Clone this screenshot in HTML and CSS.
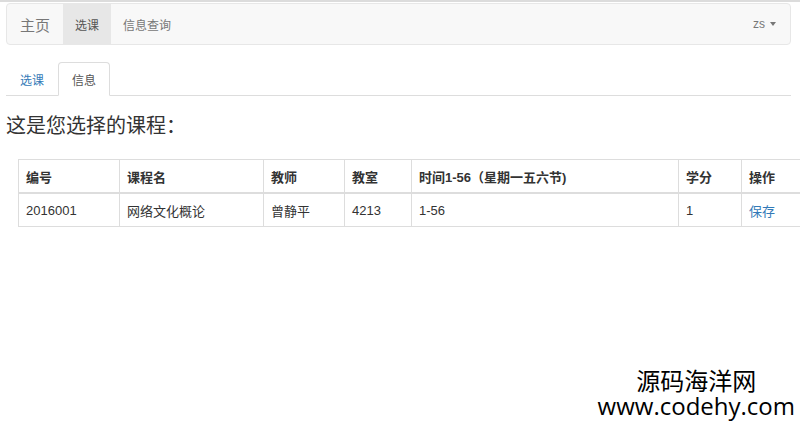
FILE: index.html
```html
<!DOCTYPE html>
<html lang="zh-CN">
<head>
<meta charset="utf-8">
<title>选课</title>
<link rel="stylesheet" href="styles.css">
</head>
<body>
<div class="page">
  <nav class="navbar">
    <a class="brand">主页</a>
    <ul class="nav">
      <li class="nav-item active">选课</li>
      <li class="nav-item">信息查询</li>
    </ul>
    <div class="user">zs <span class="caret"></span></div>
  </nav>

  <ul class="tabs">
    <li class="tab">选课</li>
    <li class="tab tab-active">信息</li>
  </ul>

  <h3 class="title">这是您选择的课程：</h3>

  <div class="table-wrap">
    <table class="courses">
      <colgroup>
        <col class="c1"><col class="c2"><col class="c3"><col class="c4"><col class="c5"><col class="c6"><col class="c7">
      </colgroup>
      <thead>
        <tr><th>编号</th><th>课程名</th><th>教师</th><th>教室</th><th>时间1-56（星期一五六节)</th><th>学分</th><th>操作</th></tr>
      </thead>
      <tbody>
        <tr><td>2016001</td><td>网络文化概论</td><td>曾静平</td><td>4213</td><td>1-56</td><td>1</td><td><a class="link">保存</a></td></tr>
      </tbody>
    </table>
  </div>
</div>
<div class="watermark">源码海洋网
www.codehy.com</div>
</body>
</html>
```

FILE: styles.css
```css
html, body {
  margin: 0;
  padding: 0;
  background: #fff;
}
body {
  width: 800px;
  height: 422px;
  overflow: hidden;
  border-top: 2px solid #dcdcdc;
  box-sizing: border-box;
  font-family: "Liberation Sans", "Noto Sans CJK SC", Arial, sans-serif;
  color: #333;
  position: relative;
}
.page {
  padding: 1px 9px 0 6px;
}
.navbar {
  display: flex;
  align-items: stretch;
  height: 42px;
  box-sizing: border-box;
  background: #f8f8f8;
  border: 1px solid #e7e7e7;
  border-radius: 4px;
}
.brand {
  display: flex;
  align-items: center;
  padding: 0 13px;
  font-size: 15px;
  color: #777;
  font-family: "Noto Sans CJK SC", sans-serif;
}
.nav {
  display: flex;
  list-style: none;
  margin: 0;
  padding: 0;
}
.nav-item {
  display: flex;
  align-items: center;
  padding: 0 12px;
  font-size: 12px;
  color: #777;
  font-family: "Noto Sans CJK SC", sans-serif;
}
.nav-item.active {
  background: #e7e7e7;
  color: #555;
}
.user {
  margin-left: auto;
  display: flex;
  align-items: center;
  padding-right: 14px;
  font-size: 12px;
  color: #777;
}
.caret {
  display: inline-block;
  width: 0;
  height: 0;
  margin-left: 5px;
  border-top: 4px solid #777;
  border-left: 3.5px solid transparent;
  border-right: 3.5px solid transparent;
}
.tabs {
  display: flex;
  list-style: none;
  margin: 17px 0 0 0;
  padding: 0;
  border-bottom: 1px solid #ddd;
}
.tab {
  height: 34px;
  box-sizing: border-box;
  display: flex;
  align-items: center;
  padding: 0 13px;
  font-size: 12px;
  color: #337ab7;
  font-family: "Noto Sans CJK SC", sans-serif;
  border: 1px solid transparent;
  border-radius: 4px 4px 0 0;
  margin-bottom: -1px;
}
.tab-active {
  color: #555;
  background: #fff;
  border-color: #ddd #ddd transparent #ddd;
}
.title {
  margin: 15px 0 0 0;
  font-size: 20px;
  font-weight: normal;
  line-height: 28px;
  color: #333;
  font-family: "Noto Sans CJK SC", sans-serif;
}
.table-wrap {
  margin: 20px -9px 0 12px;
  overflow: hidden;
}
.courses {
  border-collapse: collapse;
  table-layout: fixed;
  width: 834px;
  font-size: 13px;
}
.c1 { width: 101px; }
.c2 { width: 144px; }
.c3 { width: 81px; }
.c4 { width: 67px; }
.c5 { width: 267px; }
.c6 { width: 63px; }
.c7 { width: 111px; }
.courses th, .courses td {
  border: 1px solid #ddd;
  padding: 0 7px;
  height: 32px;
  text-align: left;
  white-space: nowrap;
}
.courses th {
  font-weight: bold;
  border-bottom: 2px solid #ddd;
  color: #333;
}
.courses td {
  color: #333;
}
.link {
  color: #337ab7;
}
.watermark {
  position: absolute;
  right: 5px;
  bottom: 4px;
  white-space: pre-line;
  text-align: center;
  color: #000;
  font-family: "Open Sans", "Noto Sans CJK SC", sans-serif;
  font-size: 24px;
  line-height: 25px;
}
```
